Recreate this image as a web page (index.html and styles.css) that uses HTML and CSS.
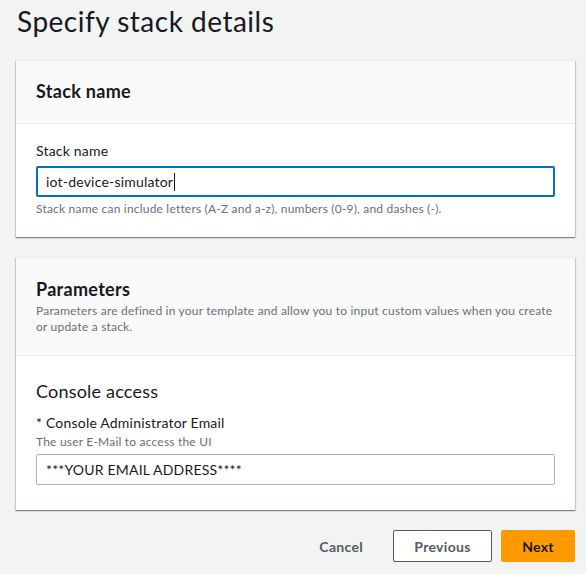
FILE: index.html
```html
<!DOCTYPE html>
<html>
<head>
<meta charset="utf-8">
<link rel="stylesheet" href="styles.css">
</head>
<body>
<div class="page">
  <h1 class="title">Specify stack details</h1>

  <section class="card">
    <div class="card-header">
      <h2 class="card-title">Stack name</h2>
    </div>
    <div class="card-body">
      <label class="label">Stack name</label>
      <div class="input focused"><span>iot-device-simulator</span><span class="caret"></span></div>
      <div class="hint">Stack name can include letters (A-Z and a-z), numbers (0-9), and dashes (-).</div>
    </div>
  </section>

  <section class="card">
    <div class="card-header header2">
      <h2 class="card-title">Parameters</h2>
      <p class="card-desc">Parameters are defined in your template and allow you to input custom values when you create or update a stack.</p>
    </div>
    <div class="card-body body2">
      <h3 class="group-title">Console access</h3>
      <label class="label">* Console Administrator Email</label>
      <div class="desc">The user E-Mail to access the UI</div>
      <div class="input plain"><span>***YOUR EMAIL ADDRESS****</span></div>
    </div>
  </section>

  <div class="actions">
    <button class="btn link">Cancel</button>
    <button class="btn normal">Previous</button>
    <button class="btn primary">Next</button>
  </div>
</div>
</body>
</html>
```

FILE: styles.css
```css
* { box-sizing: border-box; }
html, body {
  margin: 0;
  padding: 0;
  background: #f2f3f3;
}
body {
  font-family: Lato, "Open Sans", sans-serif;
  color: #16191f;
  letter-spacing: 0.2px;
}
.page {
  padding: 0 11px 0 16px;
  width: 586px;
}
.title {
  margin: 0;
  padding: 3px 0 0 1px;
  font-size: 28px;
  font-weight: 400;
  line-height: 36px;
  height: 60px;
  letter-spacing: 0.5px;
  color: #16191f;
}
.card {
  background: #fff;
  border-top: 1px solid #eaeded;
  box-shadow: 0 1px 1px 0 rgba(0,28,36,.3), 1px 1px 1px 0 rgba(0,28,36,.15), -1px 1px 1px 0 rgba(0,28,36,.15);
  margin-bottom: 20px;
}
.card-header {
  background: #fafafa;
  border-bottom: 1px solid #eaeded;
  padding: 18px 20px 20px;
}
.header2 {
  padding-top: 19px;
  padding-bottom: 20px;
}
.card-title {
  margin: 0;
  font-size: 18px;
  font-weight: 700;
  line-height: 24px;
  letter-spacing: 0.3px;
}
.card-desc {
  margin: 2px 0 0;
  font-size: 12px;
  line-height: 16px;
  color: #687078;
}
.card-body {
  padding: 16px 20px 20px;
}
.body2 {
  padding-top: 24px;
  padding-bottom: 25px;
}
.group-title {
  margin: 0 0 10px;
  font-size: 18px;
  font-weight: 400;
  line-height: 22px;
}
.label {
  display: block;
  font-size: 14px;
  line-height: 22px;
  margin-bottom: 4px;
}
.desc {
  font-size: 12px;
  line-height: 16px;
  color: #687078;
  margin: -4px 0 4px;
}
.input {
  height: 32px;
  display: flex;
  align-items: center;
  font-size: 14px;
  padding: 0 9px;
  border-radius: 2px;
  background: #fff;
}
.input.focused {
  border: 2px solid #0073bb;
  padding: 0 8px;
  height: 31px;
  margin-top: 1px;
}
.input.plain {
  height: 31px;
  border: 1px solid #aab7b8;
}
.caret {
  display: inline-block;
  width: 1px;
  height: 18px;
  background: #16191f;
  margin-left: 1px;
}
.hint {
  margin-top: 4px;
  font-size: 12px;
  line-height: 16px;
  color: #687078;
}
.actions {
  display: flex;
  justify-content: flex-end;
  align-items: center;
  gap: 9px;
}
.btn {
  font-family: inherit;
  font-size: 14px;
  font-weight: 700;
  height: 32px;
  padding: 0 20px;
  border-radius: 2px;
  cursor: pointer;
  letter-spacing: 0.3px;
}
.btn.link {
  background: transparent;
  border: 1px solid transparent;
  color: #545b64;
}
.btn.normal {
  background: #fff;
  border: 1px solid #545b64;
  color: #545b64;
  width: 99px;
}
.btn.primary {
  background: #ff9900;
  border: 1px solid #ff9900;
  color: #16191f;
  width: 74px;
}
```
